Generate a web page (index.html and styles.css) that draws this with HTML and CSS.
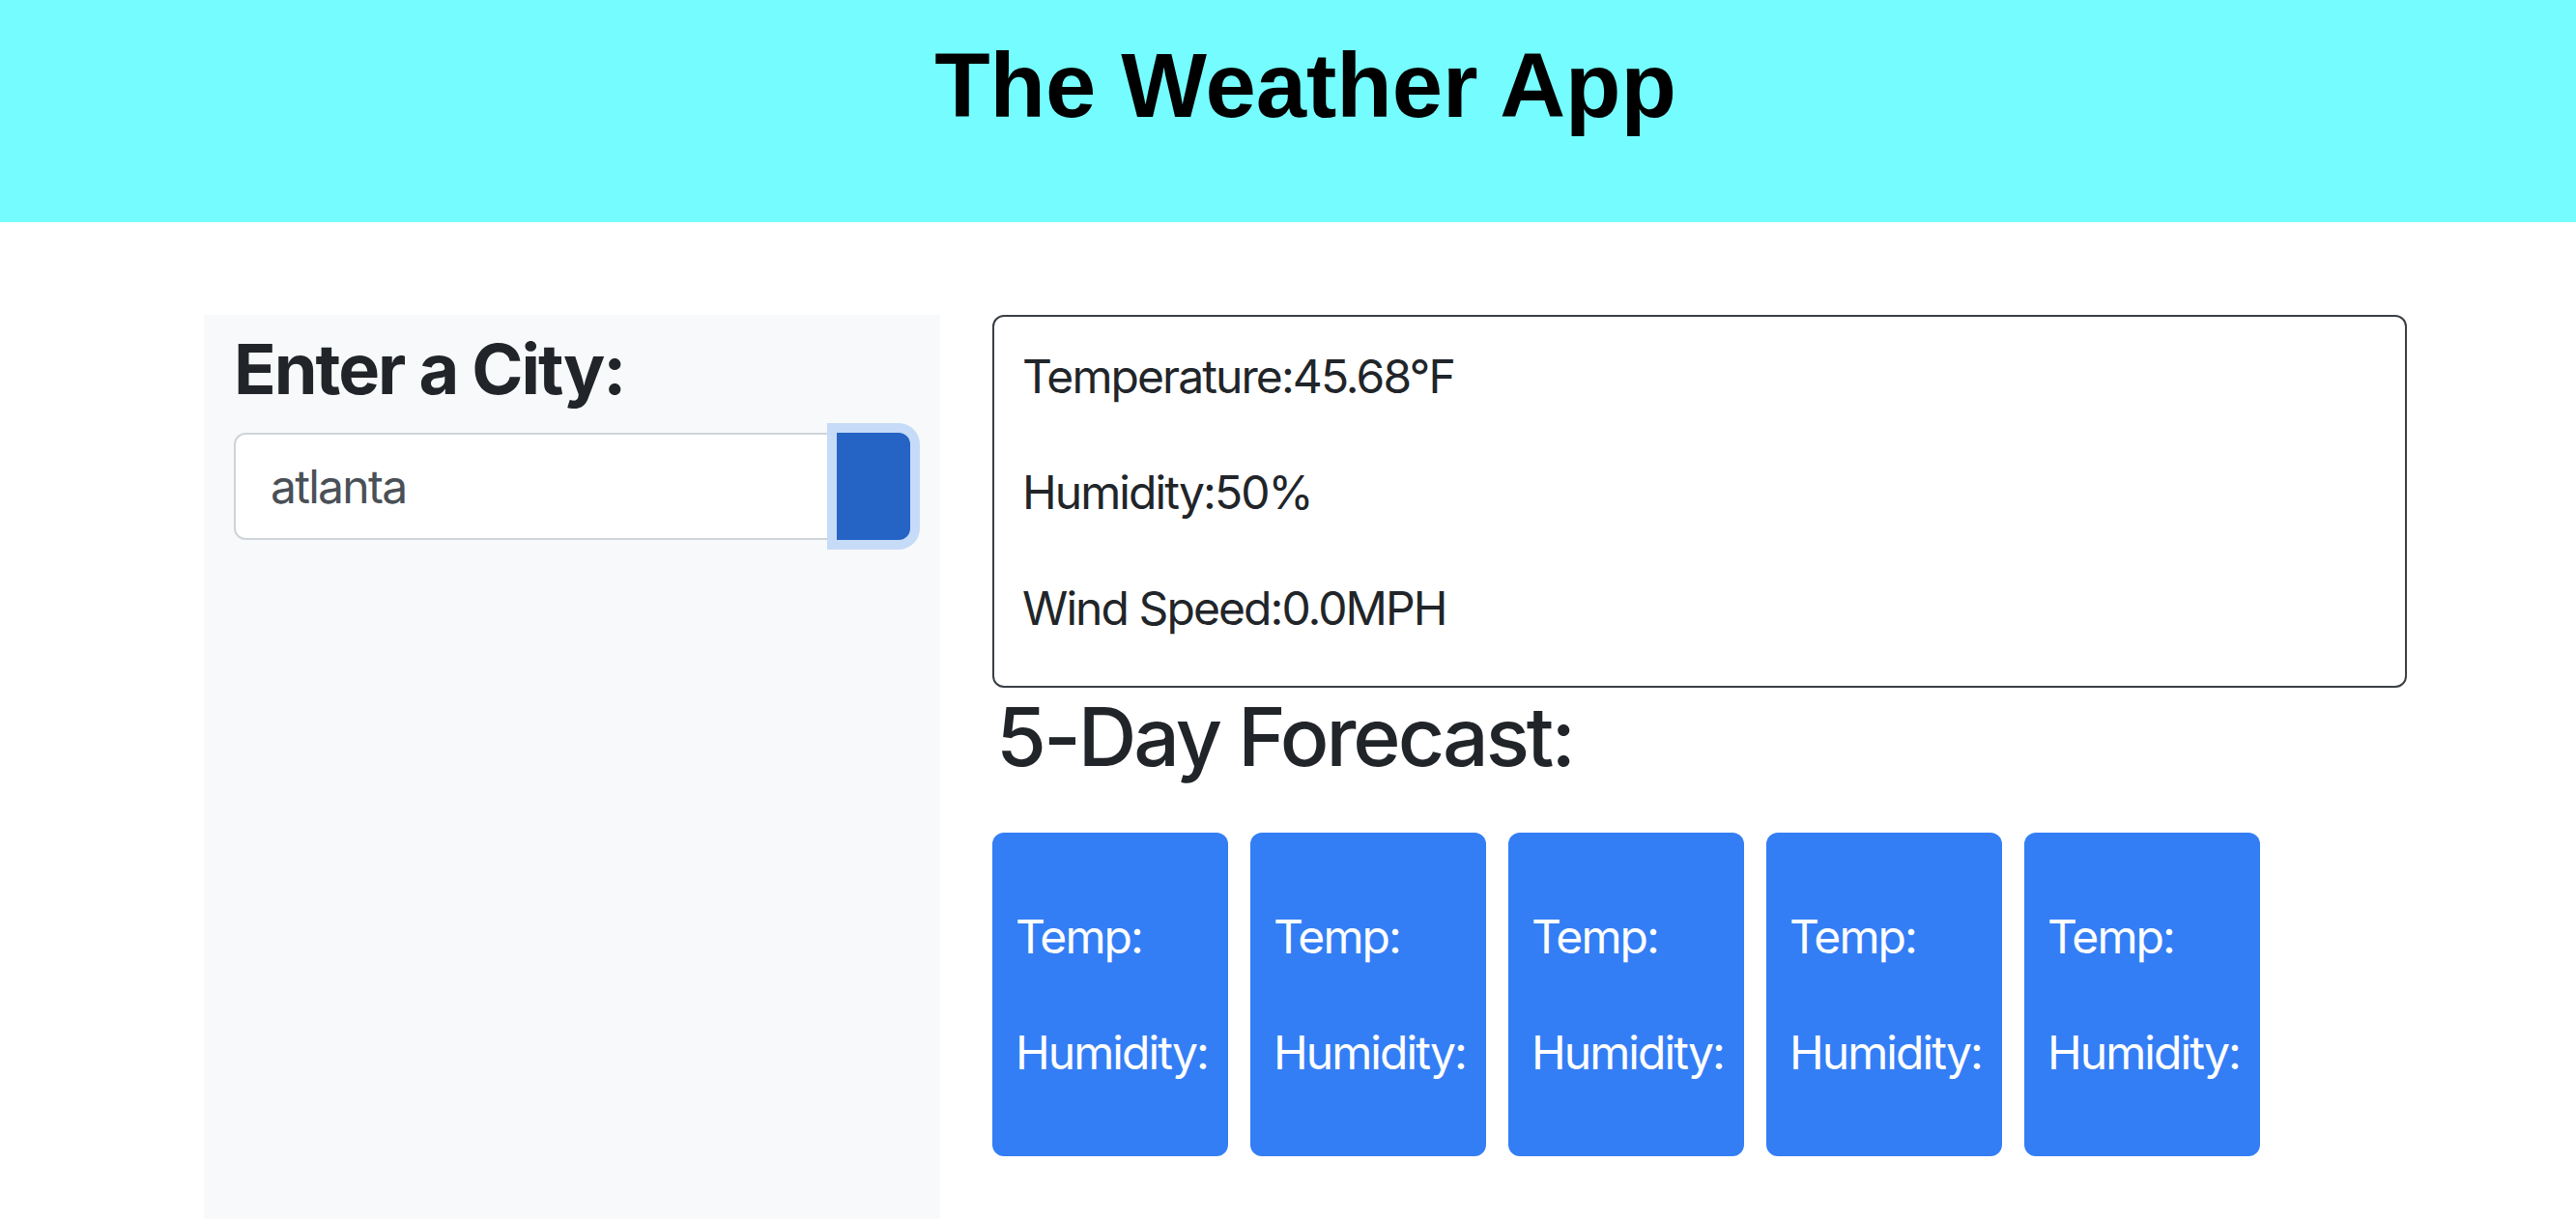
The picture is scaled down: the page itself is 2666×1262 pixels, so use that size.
FILE: index.html
```html
<!DOCTYPE html>
<html lang="en">
<head>
<meta charset="utf-8">
<title>The Weather App</title>
<link rel="stylesheet" href="styles.css">
</head>
<body>
<header class="app-header">
  <h1 class="app-title">The Weather App</h1>
</header>
<main class="layout">
  <aside class="sidebar">
    <h2 class="sidebar-title">Enter a City:</h2>
    <div class="search-group">
      <input class="search-input" type="text" value="atlanta">
      <button class="search-btn" type="button"></button>
    </div>
  </aside>
  <section class="content">
    <div class="current">
      <p class="current-line">Temperature:45.68°F</p>
      <p class="current-line">Humidity:50%</p>
      <p class="current-line">Wind Speed:0.0MPH</p>
    </div>
    <h3 class="forecast-title">5-Day Forecast:</h3>
    <div class="forecast-row">
      <div class="day-card"><p class="day-line">Temp:</p><p class="day-line">Humidity:</p></div>
      <div class="day-card"><p class="day-line">Temp:</p><p class="day-line">Humidity:</p></div>
      <div class="day-card"><p class="day-line">Temp:</p><p class="day-line">Humidity:</p></div>
      <div class="day-card"><p class="day-line">Temp:</p><p class="day-line">Humidity:</p></div>
      <div class="day-card"><p class="day-line">Temp:</p><p class="day-line">Humidity:</p></div>
    </div>
  </section>
</main>
</body>
</html>
```
FILE: styles.css
```css
* { box-sizing: border-box; }
html, body { margin: 0; padding: 0; background: #ffffff; }
body {
  font-family: Inter, "Noto Sans", sans-serif;
  font-size: 48px;
  line-height: 72px;
  letter-spacing: -0.04em;
  color: #212529;
  height: 1262px;
  overflow: hidden;
}
.app-header {
  height: 230px;
  background: #75fcff;
  padding: 34px 0 0 36px;
  text-align: center;
}
.app-title {
  margin: 0;
  font-family: "Liberation Sans", Arial, sans-serif;
  font-weight: 700;
  font-size: 94px;
  line-height: 110px;
  letter-spacing: 0;
  color: #000;
}
.layout {
  display: flex;
  gap: 54px;
  padding-left: 211px;
  margin-top: 96px;
  align-items: flex-start;
}
.sidebar {
  width: 762px;
  height: 936px;
  background: #f8f9fa;
  padding: 13px 31px 0;
}
.sidebar-title {
  margin: 0 0 23px;
  font-size: 72px;
  font-weight: 700;
  line-height: 86px;
  letter-spacing: -0.028em;
}
.search-group {
  display: flex;
  width: 700px;
}
.search-input {
  width: 624px;
  height: 111px;
  border: 2px solid #ced4da;
  border-radius: 12px 0 0 12px;
  padding: 0 36px;
  font-family: Inter, sans-serif;
  font-size: 48px;
  letter-spacing: -0.036em;
  color: #495057;
  background: #fff;
  outline: none;
}
.search-btn {
  width: 76px;
  height: 111px;
  border: 0;
  border-radius: 0 12px 12px 0;
  background: #2563c4;
  box-shadow: 0 0 0 10px #c6dbf7;
}
.content {
  width: 1464px;
}
.current {
  border: 2px solid #3a3f44;
  border-radius: 12px;
  padding: 26px 29px 0;
}
.current-line {
  margin: 0 0 48px;
}
.current-line:last-child {
  margin-bottom: 44px;
}
.forecast-title {
  margin: 0 0 49px;
  font-size: 84px;
  font-weight: 500;
  line-height: 101px;
  letter-spacing: -0.036em;
  padding-left: 4px;
}
.forecast-row {
  display: flex;
  gap: 23px;
}
.day-card {
  width: 244px;
  height: 335px;
  background: #347ef5;
  color: #ffffff;
  border-radius: 12px;
  padding: 72px 24px 0;
}
.day-line {
  margin: 0 0 48px;
  white-space: nowrap;
}
```
